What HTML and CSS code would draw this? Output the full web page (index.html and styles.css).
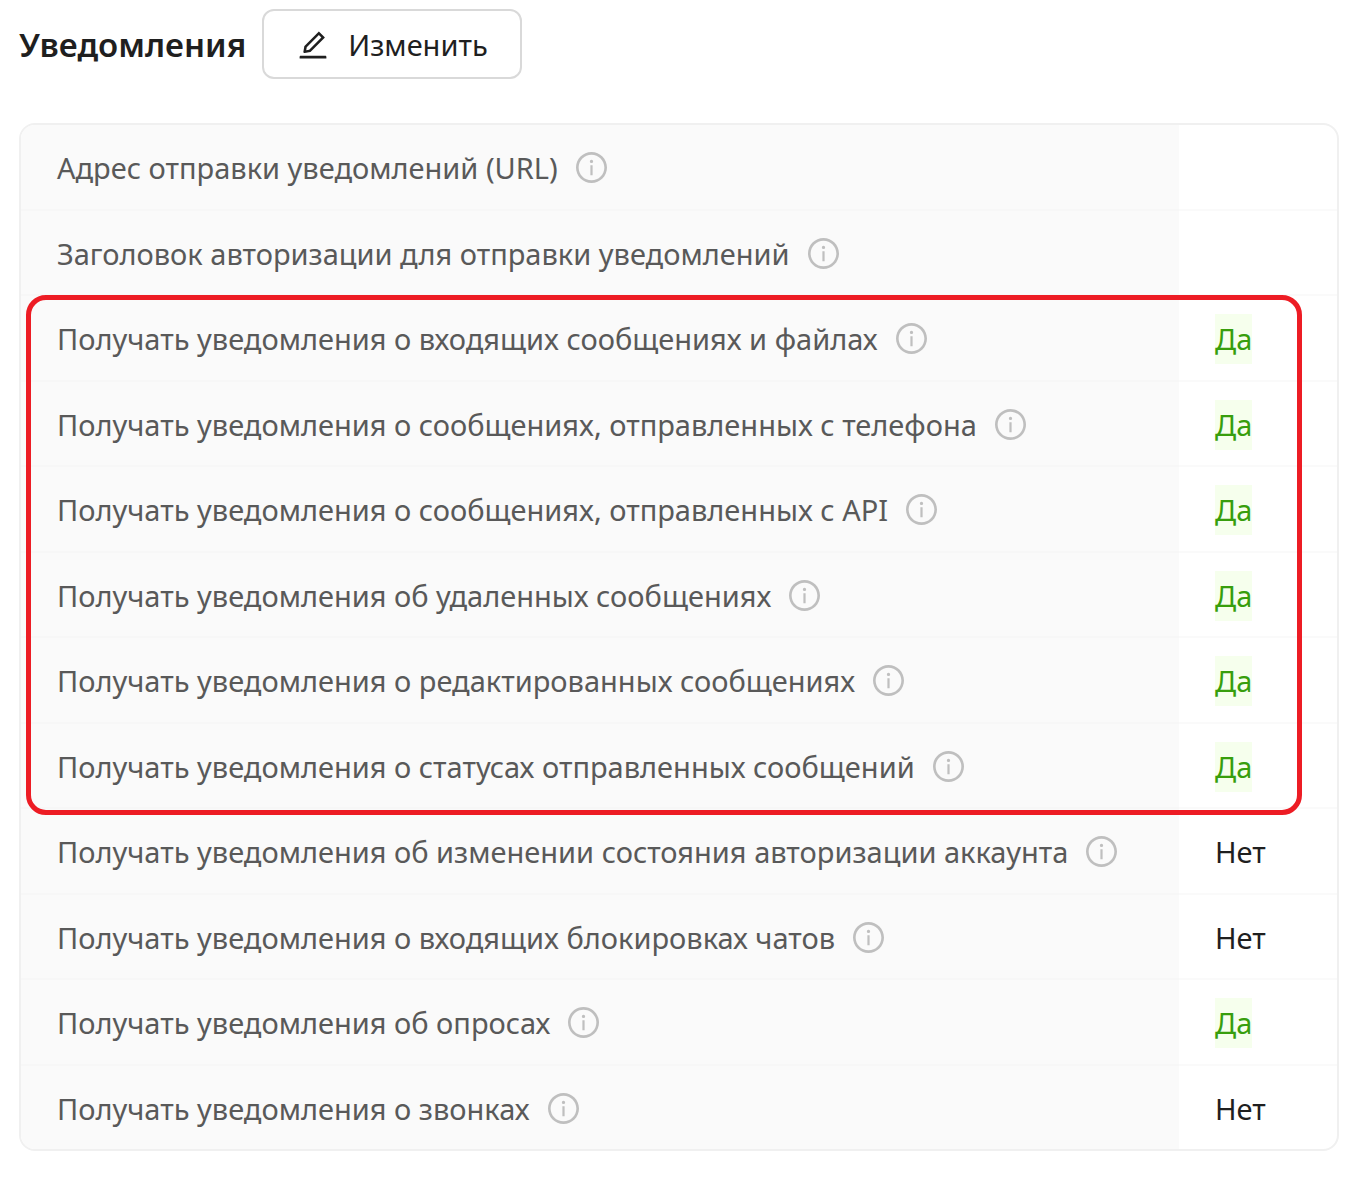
FILE: index.html
```html
<!DOCTYPE html>
<html lang="ru">
<head>
<meta charset="utf-8">
<title>Уведомления</title>
<link rel="stylesheet" href="styles.css">
</head>
<body>
<svg class="sprite" aria-hidden="true">
<symbol id="info" viewBox="64 64 896 896"><path d="M512 64C264.600 64 64 264.600 64 512s200.600 448 448 448 448-200.600 448-448S759.400 64 512 64zm0 820c-205.400 0-372-166.600-372-372s166.600-372 372-372 372 166.600 372 372-166.600 372-372 372z"/><path d="M464 336a48 48 0 1 0 96 0 48 48 0 1 0-96 0zm72 112h-48c-4.400 0-8 3.600-8 8v272c0 4.400 3.600 8 8 8h48c4.400 0 8-3.600 8-8V456c0-4.400-3.600-8-8-8z"/></symbol>
</svg>
<main class="page">
<header class="header">
<h1 class="title">Уведомления</h1>
<button class="edit" type="button"><svg class="edit-icon" viewBox="64 64 896 896" aria-hidden="true"><path d="M257.700 752c2 0 4-.2 6-.5L431.900 722c2-.4 3.900-1.300 5.300-2.800l423.900-423.900a9.960 9.960 0 0 0 0-14.100L694.900 114.900c-1.900-1.900-4.400-2.900-7.100-2.900s-5.200 1-7.100 2.900L256.800 538.800c-1.500 1.500-2.400 3.300-2.800 5.300l-29.500 168.200a33.500 33.500 0 0 0 9.400 29.800c6.600 6.400 14.900 9.900 23.800 9.900zm67.400-174.400L687.800 215l73.300 73.300-362.700 362.600-88.900 15.700 15.600-89zM880 836H144c-17.700 0-32 14.300-32 32v36c0 4.400 3.600 8 8 8h784c4.400 0 8-3.600 8-8v-36c0-17.700-14.300-32-32-32z"/></svg><span>Изменить</span></button>
</header>
<div class="card">
<table class="settings">
<tbody>
<tr><th scope="row">Адрес отправки уведомлений (URL)<svg class="info"><use href="#info"/></svg></th><td></td></tr>
<tr><th scope="row">Заголовок авторизации для отправки уведомлений<svg class="info"><use href="#info"/></svg></th><td></td></tr>
<tr><th scope="row">Получать уведомления о входящих сообщениях и файлах<svg class="info"><use href="#info"/></svg></th><td><span class="yes">Да</span></td></tr>
<tr><th scope="row">Получать уведомления о сообщениях, отправленных с телефона<svg class="info"><use href="#info"/></svg></th><td><span class="yes">Да</span></td></tr>
<tr><th scope="row">Получать уведомления о сообщениях, отправленных с API<svg class="info"><use href="#info"/></svg></th><td><span class="yes">Да</span></td></tr>
<tr><th scope="row">Получать уведомления об удаленных сообщениях<svg class="info"><use href="#info"/></svg></th><td><span class="yes">Да</span></td></tr>
<tr><th scope="row">Получать уведомления о редактированных сообщениях<svg class="info"><use href="#info"/></svg></th><td><span class="yes">Да</span></td></tr>
<tr><th scope="row">Получать уведомления о статусах отправленных сообщений<svg class="info"><use href="#info"/></svg></th><td><span class="yes">Да</span></td></tr>
<tr><th scope="row">Получать уведомления об изменении состояния авторизации аккаунта<svg class="info"><use href="#info"/></svg></th><td>Нет</td></tr>
<tr><th scope="row">Получать уведомления о входящих блокировках чатов<svg class="info"><use href="#info"/></svg></th><td>Нет</td></tr>
<tr><th scope="row">Получать уведомления об опросах<svg class="info"><use href="#info"/></svg></th><td><span class="yes">Да</span></td></tr>
<tr><th scope="row">Получать уведомления о звонках<svg class="info"><use href="#info"/></svg></th><td>Нет</td></tr>
</tbody>
</table>
<div class="highlight"></div>
</div>
</main>
</body>
</html>
```
FILE: styles.css
```css
* { box-sizing: border-box; }
body { margin: 0; background: #fff; color: #1f1f1f; font-family: "Noto Sans", "Open Sans", sans-serif; font-size: 29px; line-height: 50px; }
.sprite { position: absolute; width: 0; height: 0; }
.page { padding: 9px 18px 26px 19px; }
.header { display: flex; align-items: center; gap: 16px; margin-bottom: 44px; }
.title { margin: 0; padding-top: 2px; font-size: 33px; font-weight: 600; }
.edit { display: flex; align-items: center; gap: 20px; height: 70px; padding: 2px 32px 0 34px; border: 2px solid #d9d9d9; border-radius: 12px; background: #fff; color: #1f1f1f; font: inherit; }
.edit-icon { width: 30px; height: 30px; fill: currentColor; }
.card { position: relative; border: 2px solid #f0f0f0; border-radius: 16px; }
.settings { width: 100%; table-layout: fixed; border-spacing: 0; border-collapse: separate; }
.settings th, .settings td { height: 86px; padding: 2px 36px 0; border-bottom: 2px solid #f7f7f7; text-align: left; font-weight: 400; white-space: nowrap; }
.settings tr:nth-child(even) > * { height: 85px; }
.settings th { background: #fafafa; color: #595959; }
.settings td { width: 158px; border-bottom-color: #fafafa; }
.settings tr:last-child > * { height: 83px; border-bottom: 0; }
.settings tr:first-child th { border-top-left-radius: 14px; }
.settings tr:last-child th { border-bottom-left-radius: 14px; }
.info { width: 31px; height: 31px; margin-left: 18px; vertical-align: -4px; fill: #bfbfbf; }
.yes { display: inline-block; background: #f6ffed; color: #389e0d; }
.highlight { position: absolute; top: 170px; left: 5px; right: 35px; height: 520px; border: 5px solid #ed1c24; border-radius: 20px; pointer-events: none; }
```
